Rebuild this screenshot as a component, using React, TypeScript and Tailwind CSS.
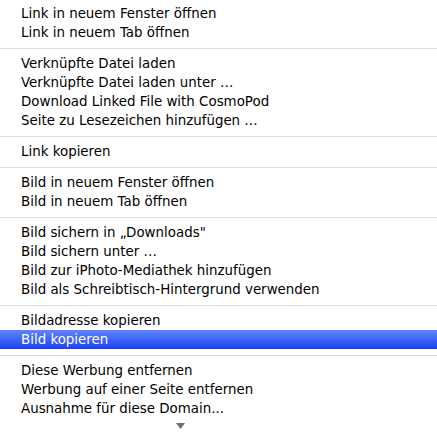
import React from 'react';

type Entry = { label: string; active?: boolean } | 'sep';

const entries: Entry[] = [
  { label: 'Link in neuem Fenster öffnen' },
  { label: 'Link in neuem Tab öffnen' },
  'sep',
  { label: 'Verknüpfte Datei laden' },
  { label: 'Verknüpfte Datei laden unter …' },
  { label: 'Download Linked File with CosmoPod' },
  { label: 'Seite zu Lesezeichen hinzufügen …' },
  'sep',
  { label: 'Link kopieren' },
  'sep',
  { label: 'Bild in neuem Fenster öffnen' },
  { label: 'Bild in neuem Tab öffnen' },
  'sep',
  { label: 'Bild sichern in „Downloads"' },
  { label: 'Bild sichern unter …' },
  { label: 'Bild zur iPhoto-Mediathek hinzufügen' },
  { label: 'Bild als Schreibtisch-Hintergrund verwenden' },
  'sep',
  { label: 'Bildadresse kopieren' },
  { label: 'Bild kopieren', active: true },
  'sep',
  { label: 'Diese Werbung entfernen' },
  { label: 'Werbung auf einer Seite entfernen' },
  { label: 'Ausnahme für diese Domain...' },
];

export default function App() {
  return (
    <div
      className="w-[437px] h-[434px] bg-white overflow-hidden pt-[4px] text-[13.4px] text-black"
      style={{ fontFamily: '"DejaVu Sans", "Lucida Grande", sans-serif' }}
    >
      {entries.map((e, i) =>
        e === 'sep' ? (
          <div key={i} className="h-[12px] flex items-center">
            <div className="h-px w-full bg-[#dedede]" />
          </div>
        ) : (
          <div
            key={i}
            className={
              e.active
                ? 'h-[19px] flex items-center pl-[21px] text-white bg-gradient-to-b from-[#6482f9] to-[#1a3cf7]'
                : 'h-[19px] flex items-center pl-[21px]'
            }
          >
            <span className="leading-none whitespace-nowrap">{e.label}</span>
          </div>
        )
      )}
      {/* scroll arrow */}
      <div className="h-[16px] flex items-center pl-[176px]">
        <svg width="9" height="6" viewBox="0 0 9 6">
          <polygon points="0,0 9,0 4.5,6" fill="#6e6e6e" />
        </svg>
      </div>
    </div>
  );
}
